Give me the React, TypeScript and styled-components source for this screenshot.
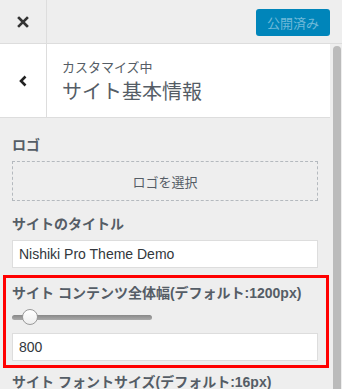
import styled, { createGlobalStyle } from "styled-components"

const GlobalStyle = createGlobalStyle`
  html, body {
    margin: 0;
    padding: 0;
    background: #eee;
  }
  body {
    font-family: "Liberation Sans", "Noto Sans CJK JP", sans-serif;
    color: #555d66;
    overflow: hidden;
  }
`

const Shell = styled.div`
  width: 342px;
  height: 389px;
  display: flex;
  flex-direction: column;
  background: #eee;
  overflow: hidden;
`

const TopBar = styled.div`
  height: 44px;
  flex-shrink: 0;
  display: flex;
  align-items: center;
  border-bottom: 1px solid #ddd;
  box-sizing: border-box;
`

const CloseButton = styled.div`
  width: 47px;
  height: 100%;
  display: flex;
  align-items: center;
  justify-content: center;
  border-right: 1px solid #ddd;
  box-sizing: border-box;
  color: #333;
`

const Publish = styled.div`
  margin-left: auto;
  margin-right: 12px;
  margin-top: 1px;
  width: 74px;
  height: 27px;
  border-radius: 3px;
  background: #0085ba;
  color: #6fb9d9;
  font-size: 13px;
  display: flex;
  align-items: center;
  justify-content: center;
`

const Body = styled.div`
  flex: 1;
  display: flex;
  min-height: 0;
`

const Panel = styled.div`
  width: 330px;
  display: flex;
  flex-direction: column;
  & > * {
    flex-shrink: 0;
  }
`

const Track = styled.div`
  width: 12px;
  padding: 2px 1px 0 3px;
  box-sizing: border-box;
`

const Thumb = styled.div`
  width: 8px;
  height: 100%;
  background: #bbb;
  border-radius: 4px 4px 0 0;
`

const Header = styled.div`
  height: 74px;
  display: flex;
  background: #fff;
  border-bottom: 1px solid #ddd;
  box-sizing: border-box;
`

const BackButton = styled.div`
  width: 47px;
  display: flex;
  align-items: center;
  justify-content: center;
  border-right: 1px solid #ddd;
  box-sizing: border-box;
  color: #222;
`

const HeaderText = styled.div`
  padding: 15px 0 0 15px;
  display: flex;
  flex-direction: column;
`

const Crumb = styled.span`
  font-size: 13px;
  line-height: 17px;
  color: #555d66;
`

const Title = styled.h1`
  margin: 3px 0 0;
  font-size: 20px;
  line-height: 26px;
  font-weight: 400;
  color: #555d66;
`

const Controls = styled.div`
  display: flex;
  flex-direction: column;
  padding: 17px 0 0;
`

const Control = styled.div<{ $gap: number }>`
  padding: 0 12px;
  margin-bottom: ${(p) => p.$gap}px;
`

const Highlight = styled.div`
  margin: 0 1px 4px 3px;
  border: 3px solid #f00;
  padding: 5px 8px 4px 6px;
`

const Label = styled.div`
  font-size: 14px;
  line-height: 20px;
  font-weight: 700;
  color: #555d66;
  margin-bottom: 6px;
  white-space: nowrap;
`

const MediaButton = styled.div`
  margin-top: 1px;
  height: 40px;
  border: 1px dashed #b4b9be;
  box-sizing: border-box;
  display: flex;
  align-items: center;
  justify-content: center;
  font-size: 13px;
  color: #555d66;
`

const TextInput = styled.div`
  height: 28px;
  background: #fff;
  border: 1px solid #ddd;
  box-sizing: border-box;
  padding: 0 6px;
  display: flex;
  align-items: center;
  font-size: 14px;
  color: #32373c;
`

const Slider = styled.div`
  width: 140px;
  height: 16px;
  display: flex;
  align-items: center;
  margin: 1px 0 8px;
`

const SliderRail = styled.div`
  width: 100%;
  height: 5px;
  border-radius: 3px;
  background: linear-gradient(#888, #aaa);
  box-sizing: border-box;
  display: flex;
  align-items: center;
`

const SliderKnob = styled.div`
  width: 16px;
  height: 16px;
  border-radius: 50%;
  background: linear-gradient(#fff, #eee);
  border: 1px solid #999;
  box-sizing: border-box;
  margin-left: 10px;
  flex-shrink: 0;
`

function CloseIcon() {
  return (
    <svg width="12" height="12" viewBox="0 0 12 12">
      <path d="M2 2L10 10M10 2L2 10" stroke="currentColor" strokeWidth="2.6" strokeLinecap="square" />
    </svg>
  )
}

function BackIcon() {
  return (
    <svg width="10" height="12" viewBox="0 0 10 12">
      <path d="M7.5 1.5L3 6l4.5 4.5" stroke="currentColor" strokeWidth="2.6" fill="none" />
    </svg>
  )
}

export default function App() {
  return (
    <Shell>
      <GlobalStyle />
      <TopBar>
        <CloseButton>
          <CloseIcon />
        </CloseButton>
        <Publish>公開済み</Publish>
      </TopBar>
      <Body>
        <Panel>
          <Header>
            <BackButton>
              <BackIcon />
            </BackButton>
            <HeaderText>
              <Crumb>カスタマイズ中</Crumb>
              <Title>サイト基本情報</Title>
            </HeaderText>
          </Header>
          <Controls>
            <Control $gap={13}>
              <Label>ロゴ</Label>
              <MediaButton>ロゴを選択</MediaButton>
            </Control>
            <Control $gap={7}>
              <Label>サイトのタイトル</Label>
              <TextInput>Nishiki Pro Theme Demo</TextInput>
            </Control>
            <Highlight>
              <Label>サイト コンテンツ全体幅(デフォルト:1200px)</Label>
              <Slider>
                <SliderRail>
                  <SliderKnob />
                </SliderRail>
              </Slider>
              <TextInput>800</TextInput>
            </Highlight>
            <Control $gap={0}>
              <Label>サイト フォントサイズ(デフォルト:16px)</Label>
            </Control>
          </Controls>
        </Panel>
        <Track>
          <Thumb />
        </Track>
      </Body>
    </Shell>
  )
}
